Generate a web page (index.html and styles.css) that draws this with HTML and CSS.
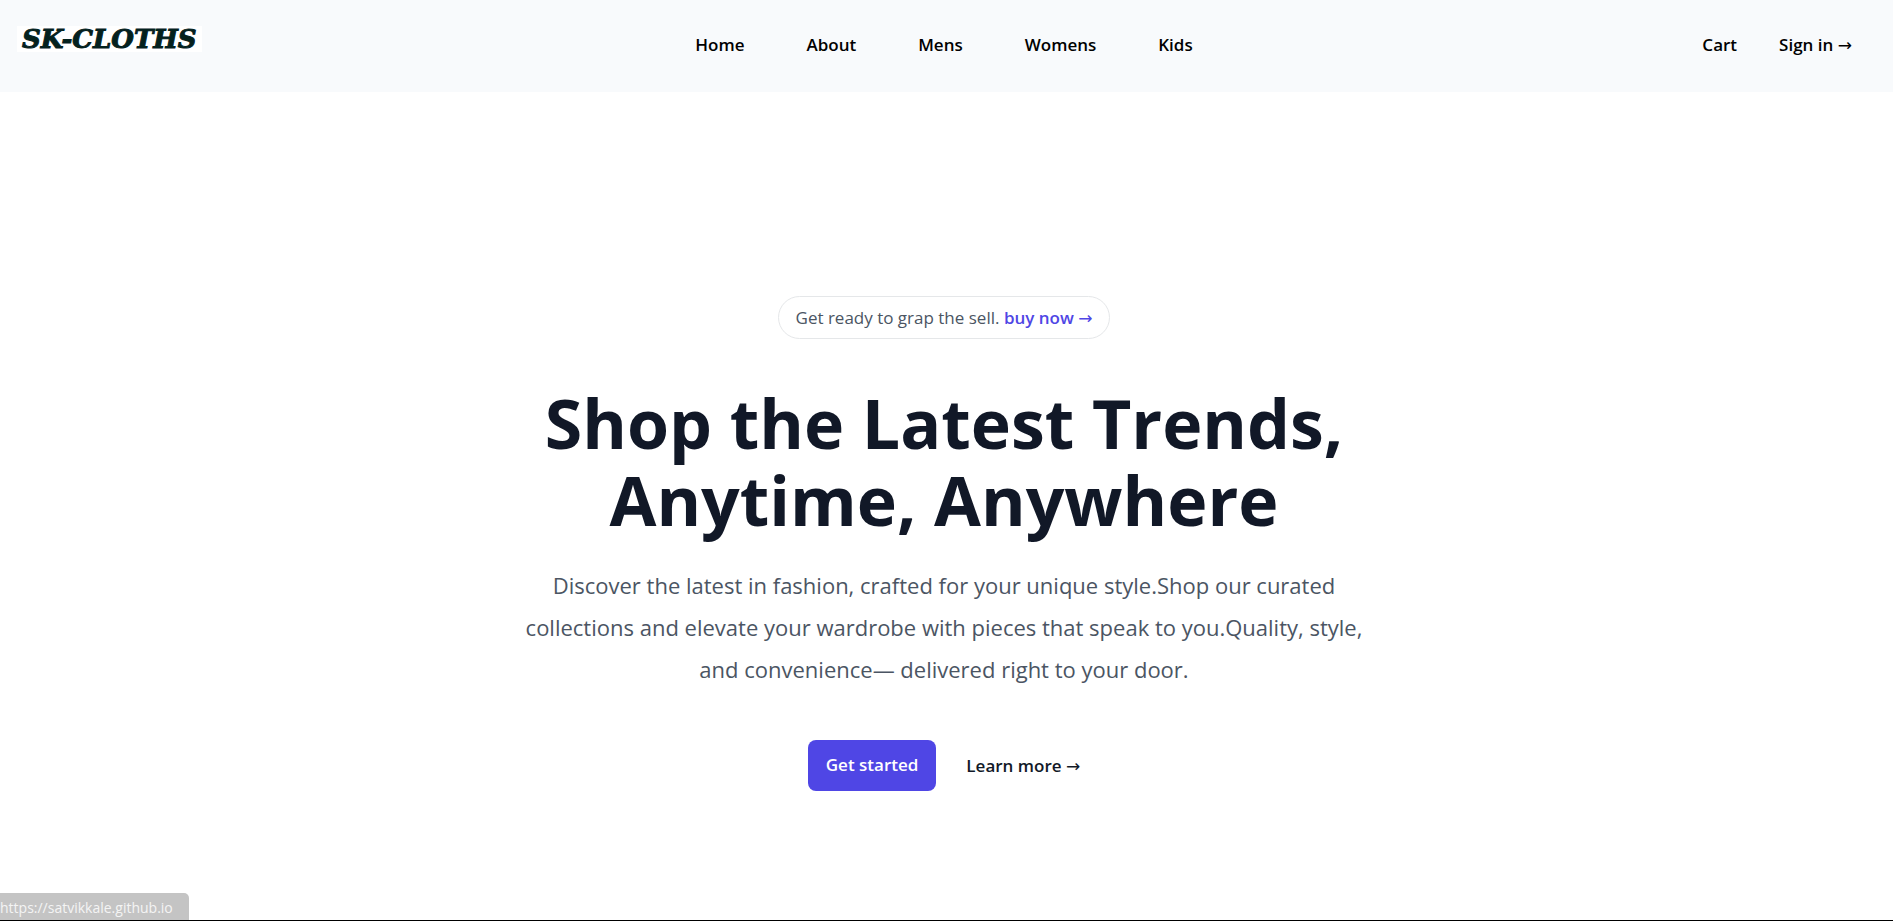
FILE: index.html
```html
<!DOCTYPE html>
<html lang="en">
<head>
<meta charset="utf-8">
<title>SK-Cloths</title>
<link rel="stylesheet" href="styles.css">
</head>
<body>
<header class="header">
  <a class="logo" href="#">SK-CLOTHS</a>
  <nav class="nav" aria-label="Main">
    <a href="#">Home</a>
    <a href="#">About</a>
    <a href="#">Mens</a>
    <a href="#">Womens</a>
    <a href="#">Kids</a>
  </nav>
  <div class="actions">
    <a href="#">Cart</a>
    <a href="#">Sign in <span class="arrow">→</span></a>
  </div>
</header>
<main class="hero">
  <p class="notice">Get ready to grap the sell. <a href="#">buy now <span class="arrow">→</span></a></p>
  <h1 class="title">Shop the Latest Trends, Anytime, Anywhere</h1>
  <p class="lead">Discover the latest in fashion, crafted for your unique style.Shop our curated collections and elevate your wardrobe with pieces that speak to you.Quality, style, and convenience— delivered right to your door.</p>
  <div class="buttons">
    <button class="primary" type="button">Get started</button>
    <a class="more" href="#">Learn more <span class="arrow">→</span></a>
  </div>
</main>
<div class="status">https://satvikkale.github.io</div>
</body>
</html>
```
FILE: styles.css
```css
* {
  box-sizing: border-box;
  margin: 0;
}

body {
  min-height: 100vh;
  border-bottom: 1px solid #000;
  background: #fff;
  color: #111827;
  font-family: "Open Sans", "Noto Sans", sans-serif;
  font-size: 17px;
  line-height: 30px;
}

a {
  color: inherit;
  text-decoration: none;
}

.arrow {
  font-family: "DejaVu Sans", sans-serif;
  font-weight: 400;
  font-size: 17px;
  line-height: 1;
}

.header {
  display: grid;
  grid-template-columns: 1fr auto 1fr;
  align-items: start;
  padding: 26px 5px 32px 0;
  background: #f8fafc;
  color: #000;
  font-weight: 600;
}

.logo {
  justify-self: start;
  margin-left: 17px;
  padding: 0 5px;
  background: #fff;
  color: #04211e;
  font: italic 700 26px/26px "DejaVu Serif", serif;
  -webkit-text-stroke: 1px #04211e;
}

.nav {
  display: flex;
  gap: 62px;
  padding-top: 4px;
}

.actions {
  display: flex;
  justify-self: end;
  gap: 42px;
  margin-right: 36px;
  padding-top: 4px;
}

.hero {
  display: flex;
  flex-direction: column;
  align-items: center;
  max-width: 845px;
  margin: 0 auto;
  padding: 204px 5px 100px 0;
  text-align: center;
}

.notice {
  padding: 6px 17px 5px;
  border: 1px solid #e5e7e9;
  border-radius: 22px;
  color: #4b5563;
}

.notice a {
  color: #4f46e5;
  font-weight: 600;
}

.title {
  margin-top: 45px;
  font-size: 68px;
  font-weight: 700;
  line-height: 77px;
}

.lead {
  margin-top: 26px;
  color: #4b5563;
  font-size: 22px;
  line-height: 42px;
}

.buttons {
  display: flex;
  align-items: center;
  gap: 30px;
  margin-top: 50px;
  font-weight: 600;
}

.primary {
  padding: 10px 18px 11px;
  border: 0;
  border-radius: 8px;
  background: #4f46e5;
  color: #fff;
  font: inherit;
}

.status {
  position: fixed;
  bottom: 1px;
  left: 0;
  padding: 3px 16px 0 0;
  border-top-right-radius: 5px;
  background: #c4c4c4;
  color: #f4f4f4;
  font-size: 14px;
  line-height: 24px;
}
```
